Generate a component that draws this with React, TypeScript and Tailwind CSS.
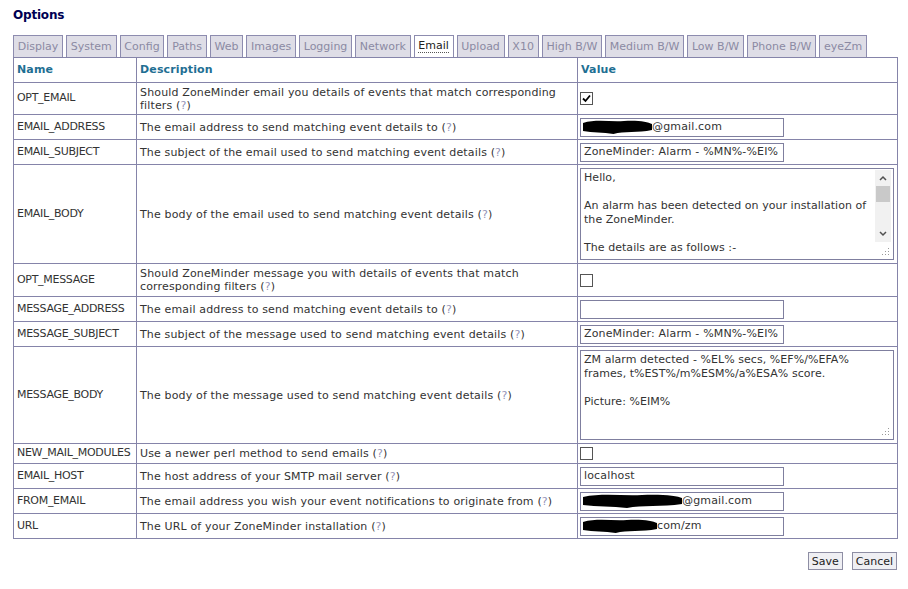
import React from 'react';

const tabs = [
  'Display', 'System', 'Config', 'Paths', 'Web', 'Images', 'Logging', 'Network',
  'Email', 'Upload', 'X10', 'High B/W', 'Medium B/W', 'Low B/W', 'Phone B/W', 'eyeZm',
];

const Help = () => (
  <span>
    (<span className="text-[#9494b8]">?</span>)
  </span>
);

function Blob({ w }: { w: number }) {
  return (
    <svg width={w} height={16} viewBox={`0 0 ${w} 16`} className="shrink-0 -ml-[2px]">
      <path
        d={`M1 4 C ${w * 0.2} 0, ${w * 0.4} 3, ${w * 0.6} 2 C ${w * 0.8} 1, ${w - 4} 3, ${w} 5 L ${w} 11 C ${w * 0.8} 14, ${w * 0.6} 12, ${w * 0.45} 15 C ${w * 0.3} 13, ${w * 0.15} 14, 1 12 Z`}
        fill="#000"
      />
    </svg>
  );
}

function TextInput({ value, blob }: { value?: string; blob?: number }) {
  return (
    <div className="w-[204px] h-[19px] border border-[#7f7f9f] bg-white flex items-center pl-[3px] overflow-hidden whitespace-nowrap">
      {blob ? <Blob w={blob} /> : null}
      <span>{value}</span>
    </div>
  );
}

function Check({ checked }: { checked?: boolean }) {
  return (
    <div className="w-[13px] h-[13px] border border-[#555] bg-white flex items-center justify-center">
      {checked ? (
        <svg width="9" height="9" viewBox="0 0 9 9">
          <path d="M1 4.5 L3.5 7 L8 1.5" stroke="#000" strokeWidth="1.8" fill="none" />
        </svg>
      ) : null}
    </div>
  );
}

function Grip() {
  return (
    <svg width="9" height="9" viewBox="0 0 9 9" className="absolute right-[3px] bottom-[3px]">
      <rect x="7" y="1" width="1" height="1" fill="#999" />
      <rect x="4" y="4" width="1" height="1" fill="#999" />
      <rect x="7" y="4" width="1" height="1" fill="#999" />
      <rect x="1" y="7" width="1" height="1" fill="#999" />
      <rect x="4" y="7" width="1" height="1" fill="#999" />
      <rect x="7" y="7" width="1" height="1" fill="#999" />
    </svg>
  );
}

function TextArea({ lines, height, scroll }: { lines: string[]; height: number; scroll?: boolean }) {
  return (
    <div
      className="relative w-[314px] border border-[#7f7f9f] bg-white pl-[3px] pt-[2px] leading-[14px] overflow-hidden tracking-[0.05px]"
      style={{ height }}
    >
      {lines.map((l, i) => (
        <div key={i} className="h-[14px] whitespace-nowrap">{l}</div>
      ))}
      {scroll ? (
        <div className="absolute right-[2px] top-[1px] w-[16px] h-[72px] bg-[#f1f1f1] flex flex-col items-center">
          <svg width="16" height="16" viewBox="0 0 16 16">
            <path d="M5 10 L8 7 L11 10" stroke="#505050" strokeWidth="1.5" fill="none" />
          </svg>
          <div className="w-[14px] h-[16px] bg-[#c9c9c9]" />
          <div className="flex-1" />
          <svg width="16" height="16" viewBox="0 0 16 16">
            <path d="M5 6 L8 9 L11 6" stroke="#505050" strokeWidth="1.5" fill="none" />
          </svg>
        </div>
      ) : null}
      <Grip />
    </div>
  );
}

type Row = { name: string; desc: React.ReactNode; value: React.ReactNode; h: number };

const rows: Row[] = [
  {
    name: 'OPT_EMAIL',
    desc: <>Should ZoneMinder email you details of events that match corresponding filters <Help /></>,
    value: <Check checked />,
    h: 32,
  },
  { name: 'EMAIL_ADDRESS', desc: <>The email address to send matching event details to <Help /></>, value: <TextInput blob={70} value="@gmail.com" />, h: 25 },
  { name: 'EMAIL_SUBJECT', desc: <>The subject of the email used to send matching event details <Help /></>, value: <TextInput value="ZoneMinder: Alarm - %MN%-%EI%" />, h: 25 },
  {
    name: 'EMAIL_BODY',
    desc: <>The body of the email used to send matching event details <Help /></>,
    value: (
      <TextArea
        height={92}
        scroll
        lines={['Hello,', '', 'An alarm has been detected on your installation of', 'the ZoneMinder.', '', 'The details are as follows :-']}
      />
    ),
    h: 99,
  },
  {
    name: 'OPT_MESSAGE',
    desc: <>Should ZoneMinder message you with details of events that match corresponding filters <Help /></>,
    value: <Check />,
    h: 33,
  },
  { name: 'MESSAGE_ADDRESS', desc: <>The email address to send matching event details to <Help /></>, value: <TextInput />, h: 25 },
  { name: 'MESSAGE_SUBJECT', desc: <>The subject of the message used to send matching event details <Help /></>, value: <TextInput value="ZoneMinder: Alarm - %MN%-%EI%" />, h: 25 },
  {
    name: 'MESSAGE_BODY',
    desc: <>The body of the message used to send matching event details <Help /></>,
    value: (
      <TextArea
        height={90}
        lines={['ZM alarm detected - %EL% secs, %EF%/%EFA%', 'frames, t%EST%/m%ESM%/a%ESA% score.', '', 'Picture: %EIM%']}
      />
    ),
    h: 97,
  },
  { name: 'NEW_MAIL_MODULES', desc: <>Use a newer perl method to send emails <Help /></>, value: <Check />, h: 20 },
  { name: 'EMAIL_HOST', desc: <>The host address of your SMTP mail server <Help /></>, value: <TextInput value="localhost" />, h: 25 },
  { name: 'FROM_EMAIL', desc: <>The email address you wish your event notifications to originate from <Help /></>, value: <TextInput blob={100} value="@gmail.com" />, h: 25 },
  { name: 'URL', desc: <>The URL of your ZoneMinder installation <Help /></>, value: <TextInput blob={75} value="com/zm" />, h: 25 },
];

export default function App() {
  return (
    <div className="w-[908px] h-[589px] bg-white text-[#333] text-[11px] tracking-[0.15px] font-['DejaVu_Sans',Verdana,sans-serif] pl-[13px] pt-[8px]">
      <h1 className="text-[12px] tracking-[-0.2px] font-bold text-[#000052] h-[27px] leading-[14px]">Options</h1>

      <div className="flex gap-[3px] h-[22px] items-end tracking-normal">
        {tabs.map((t) => {
          const active = t === 'Email';
          return (
            <div
              key={t}
              className={
                'h-[22px] px-[3.75px] border border-b-0 border-[#8d8caf] flex items-center leading-none ' +
                (active ? 'bg-white text-[#222]' : 'bg-[#dedde6] text-[#8b8aa3]')
              }
            >
              <span className={active ? 'border-b border-dotted border-[#555] pb-[1px]' : ''}>{t}</span>
            </div>
          );
        })}
      </div>

      <table className="table-fixed border-collapse w-[884px]">
        <colgroup>
          <col className="w-[123px]" />
          <col className="w-[441px]" />
          <col className="w-[320px]" />
        </colgroup>
        <thead>
          <tr className="h-[25px] text-left text-[#1f6f93] font-bold">
            <th className="border border-[#8584a9] px-[3px]">Name</th>
            <th className="border border-[#8584a9] px-[3px]">Description</th>
            <th className="border border-[#8584a9] px-[3px]">Value</th>
          </tr>
        </thead>
        <tbody>
          {rows.map((r) => (
            <tr key={r.name} style={{ height: r.h }}>
              <td className="border border-[#8584a9] px-[3px] whitespace-nowrap overflow-hidden tracking-[-0.3px]">{r.name}</td>
              <td className="border border-[#8584a9] px-[3px] leading-[13px]">{r.desc}</td>
              <td className="border border-[#8584a9] px-[2px] py-[2px]">{r.value}</td>
            </tr>
          ))}
        </tbody>
      </table>

      <div className="w-[884px] flex justify-end gap-[9px] mt-[13px] tracking-normal">
        <button className="h-[18px] px-[3px] border border-[#8e8ea4] bg-[#efeff3] text-[#222] leading-none">Save</button>
        <button className="h-[18px] px-[3px] border border-[#8e8ea4] bg-[#efeff3] text-[#222] leading-none">Cancel</button>
      </div>
    </div>
  );
}
